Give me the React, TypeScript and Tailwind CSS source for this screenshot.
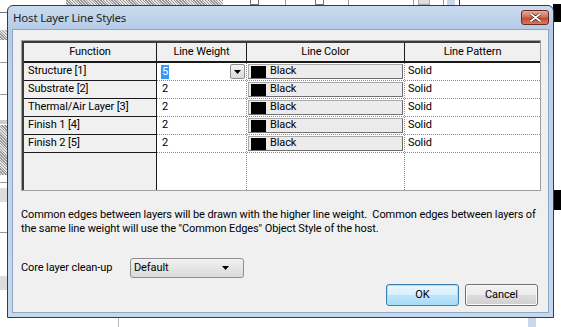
import React from "react";

const FONT = "font-['Segoe_UI','Roboto',sans-serif]";
const TITLE_FONT = "font-['Segoe_UI','Noto_Sans',sans-serif]";

interface LayerRow {
  readonly name: string;
  readonly weight: string;
}

const ROWS: LayerRow[] = [
  { name: "Structure [1]", weight: "5" },
  { name: "Substrate [2]", weight: "2" },
  { name: "Thermal/Air Layer [3]", weight: "2" },
  { name: "Finish 1 [4]", weight: "2" },
  { name: "Finish 2 [5]", weight: "2" },
];

function DropArrow(): React.JSX.Element {
  return (
    <svg width="7" height="4" viewBox="0 0 7 4">
      <path d="M0 0h7L3.5 4z" fill="#000" />
    </svg>
  );
}

function Backdrop(): React.JSX.Element {
  const hatch =
    "bg-[repeating-linear-gradient(45deg,#9a9a9a_0_1px,#e4e4e4_1px_2px)]";
  return (
    <>
      <div className={`absolute left-[66px] top-0 w-[157px] h-[6px] ${hatch}`} />
      <div className="absolute left-[250px] top-0 w-[9px] h-[5px] border border-[#777] border-t-0" />
      <div className="absolute left-[285px] top-0 w-px h-[6px] bg-[#999]" />
      <div className="absolute left-[315px] top-0 w-[9px] h-[5px] border border-[#777] border-t-0" />
      <div className="absolute left-[348px] top-0 w-px h-[6px] bg-[#999]" />
      <div className="absolute left-[413px] top-0 w-px h-[6px] bg-[#999]" />
      <div className="absolute left-[418px] top-0 w-[12px] h-[5px] bg-[#ddd] border border-[#aaa] border-t-0" />
      <div className="absolute left-[443px] top-0 w-px h-[6px] bg-[#999]" />
      <div className="absolute left-[447px] top-0 w-[8px] h-[6px] bg-[#c9d7ea]" />
      <div className="absolute left-[459px] top-0 w-px h-[6px] bg-[#333]" />
      <div className="absolute left-[553px] top-[4px] w-[8px] h-[18px] bg-black" />
      <div className="absolute left-[553px] top-[190px] w-[8px] h-[20px] bg-black" />
      <div className="absolute left-0 top-[12px] w-[7px] h-px bg-[#777]" />
      <div className={`absolute left-0 top-[30px] w-[7px] h-[10px] ${hatch}`} />
      <div className="absolute left-0 top-[62px] w-[7px] h-px bg-[#999]" />
      <div className="absolute left-0 top-[94px] w-[7px] h-px bg-[#999]" />
      <div className="absolute left-0 top-[120px] w-[7px] h-[4px] bg-[#ccc]" />
      <div className={`absolute left-0 top-[125px] w-[7px] h-[50px] ${hatch}`} />
      <div className="absolute left-0 top-[182px] w-[7px] h-px bg-[#999]" />
      <div className="absolute left-0 top-[188px] w-[7px] h-[14px] bg-[#ddd]" />
      <div className="absolute left-0 top-[232px] w-[7px] h-px bg-[#999]" />
      <div className="absolute left-0 top-[276px] w-[7px] h-[14px] bg-[#ddd]" />
      <div className="absolute left-[118px] top-[318px] w-px h-[9px] bg-[#bbb]" />
      <div className="absolute left-[528px] top-[318px] w-[8px] h-[9px] bg-[#c9d7ea]" />
    </>
  );
}

export default function App(): React.JSX.Element {
  return (
    <div className={`relative w-[561px] h-[327px] bg-white overflow-hidden text-[11px] tracking-[-0.1px] text-black ${FONT}`}>
      <Backdrop />

      <div className="absolute left-[7px] top-[5px] w-[547px] h-[313px] rounded-t-[6px] border border-[#2d3e52] bg-[linear-gradient(180deg,#c9dbef_0px,#b4cbe6_24px,#bcd2ea_60px,#c4d8ee_100%)] flex flex-col">
        <div className="h-[23px] flex items-center justify-between pl-[5px] pr-[4px] shrink-0">
          <span className={`text-[11.5px] tracking-[-0.2px] text-[#1e1e1e] pt-[1px] ${TITLE_FONT}`}>Host Layer Line Styles</span>
          <button className="w-[28px] h-[15px] rounded-[3px] border border-[#6b2a22] bg-[linear-gradient(180deg,#e9a99a_0%,#d1715d_45%,#c24a30_55%,#d77a5f_100%)] flex items-center justify-center">
            <svg width="11" height="9" viewBox="0 0 11 9">
              <path d="M1 1l9 7M10 1L1 8" stroke="#3b1510" strokeWidth="3" strokeLinecap="round" />
              <path d="M1 1l9 7M10 1L1 8" stroke="#fff" strokeWidth="1.8" strokeLinecap="round" />
            </svg>
          </button>
        </div>

        <div className="mx-[4px] mb-[4px] flex-1 bg-[#f0f0f0] border border-[#8fa6c0] flex flex-col pl-[8px] pr-[10px] pt-[10px]">
          <div className="border border-[#a0a0a0] bg-[#f0f0f0] w-[520px]">
            <div className="border-[2px] border-[#3c3c3c] border-r-0 border-b-0 flex flex-col h-[149px]">
              <div className="flex h-[20px] border-b-[2px] border-[#1a1a1a]">
                <div className="w-[133px] flex items-center justify-center border-r border-[#1a1a1a]">Function</div>
                <div className="w-[90px] flex items-center justify-center border-r border-[#1a1a1a]">Line Weight</div>
                <div className="w-[158px] flex items-center justify-center border-r border-[#1a1a1a]">Line Color</div>
                <div className="flex-1 flex items-center justify-center">Line Pattern</div>
              </div>

              <div className="flex flex-1">
                <div className="w-[133px] flex flex-col border-r border-[#1a1a1a] bg-[#f0f0f0]">
                  {ROWS.map((r) => (
                    <div key={r.name} className="h-[18px] border-b border-[#1a1a1a] pl-[4px] flex items-center">
                      {r.name}
                    </div>
                  ))}
                  <div className="flex-1" />
                </div>

                <div className="w-[90px] flex flex-col bg-white border-r border-dotted border-[#8a8a8a]">
                  {ROWS.map((r, i) => (
                    <div key={r.name} className="h-[18px] border-b border-dotted border-[#8a8a8a] pl-[4px] pr-px flex items-center justify-between">
                      {i === 0 ? (
                        <>
                          <span className="bg-[#3399ff] text-white leading-[14px] px-px">{r.weight}</span>
                          <span className="w-[15px] h-[15px] border border-[#8c8c8c] rounded-[2px] bg-[linear-gradient(180deg,#f4f4f4,#d9d9d9)] flex items-center justify-center">
                            <DropArrow />
                          </span>
                        </>
                      ) : (
                        <span className="px-px">{r.weight}</span>
                      )}
                    </div>
                  ))}
                  <div className="flex-1" />
                </div>

                <div className="w-[158px] flex flex-col bg-white border-r border-dotted border-[#8a8a8a]">
                  {ROWS.map((r) => (
                    <div key={r.name} className="h-[18px] border-b border-dotted border-[#8a8a8a] flex">
                      <div className="flex-1 m-px border border-t-[#a9a9a9] border-l-[#a9a9a9] border-r-[#6e6e6e] border-b-[#6e6e6e] bg-[#ececec] flex items-center gap-[4px] pl-[2px]">
                        <span className="w-[15px] h-[12px] bg-black" />
                        <span>Black</span>
                      </div>
                    </div>
                  ))}
                  <div className="flex-1" />
                </div>

                <div className="flex-1 flex flex-col bg-white">
                  {ROWS.map((r) => (
                    <div key={r.name} className="h-[18px] border-b border-dotted border-[#8a8a8a] pl-[3px] flex items-center">
                      Solid
                    </div>
                  ))}
                  <div className="flex-1" />
                </div>
              </div>
            </div>
          </div>

          <p className="mt-[17px] leading-[14px]">
            Common edges between layers will be drawn with the higher line weight.&nbsp; Common edges between layers of the same line weight will use the "Common Edges" Object Style of the host.
          </p>

          <div className="mt-[22px] flex items-center">
            <span className="w-[109px]">Core layer clean-up</span>
            <div className="w-[114px] h-[20px] rounded-[3px] border border-[#8e8e8e] bg-[linear-gradient(180deg,#f2f2f2,#e4e4e4_50%,#dcdcdc)] flex items-center justify-between pl-[3px] pr-[14px]">
              <span>Default</span>
              <DropArrow />
            </div>
          </div>

          <div className="mt-[6px] flex justify-end gap-[6px]">
            <button className="w-[73px] h-[22px] rounded-[3px] border border-[#3c7fb1] shadow-[inset_0_0_0_1px_#a6e1f8] bg-[linear-gradient(180deg,#eaf6fd,#d9f0fc_50%,#bee6fd_51%,#a7d9f5)]">
              OK
            </button>
            <button className="w-[73px] h-[22px] rounded-[3px] border border-[#707070] shadow-[inset_0_0_0_1px_#fcfcfc] bg-[linear-gradient(180deg,#f2f2f2,#ebebeb_50%,#dddddd_51%,#cfcfcf)]">
              Cancel
            </button>
          </div>
        </div>
      </div>
    </div>
  );
}
